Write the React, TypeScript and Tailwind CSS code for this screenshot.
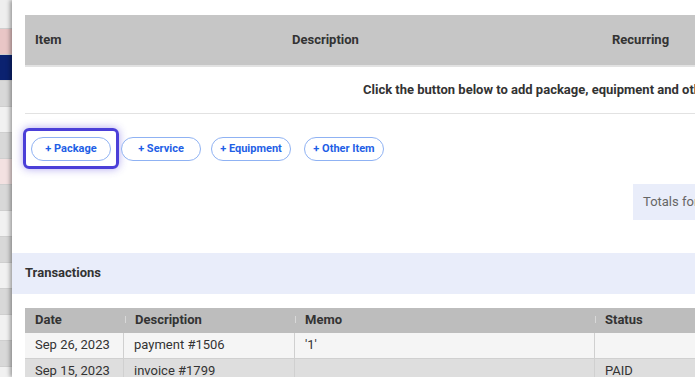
import React from "react";

const bands = [
  { h: 29, c: "bg-[#eeeeee]" },
  { h: 26, c: "bg-[#e9c6c6]" },
  { h: 26, c: "bg-[#0b2270]" },
  { h: 26, c: "bg-[#d8d8d8]" },
  { h: 26, c: "bg-[#f1f1f1]" },
  { h: 26, c: "bg-[#d8d8d8]" },
  { h: 26, c: "bg-[#f3e1e1]" },
  { h: 26, c: "bg-[#d8d8d8]" },
  { h: 26, c: "bg-[#f1f1f1]" },
  { h: 26, c: "bg-[#d8d8d8]" },
  { h: 26, c: "bg-[#f1f1f1]" },
  { h: 26, c: "bg-[#d8d8d8]" },
  { h: 26, c: "bg-[#f1f1f1]" },
  { h: 26, c: "bg-[#d8d8d8]" },
  { h: 26, c: "bg-[#f1f1f1]" },
];

const txns = [
  { date: "Sep 26, 2023", desc: "payment #1506", memo: "'1'", status: "", bg: "bg-[#f5f5f5]" },
  { date: "Sep 15, 2023", desc: "invoice #1799", memo: "", status: "PAID", bg: "bg-[#dedede]" },
];

function PillButton({ label }: { label: string }) {
  return (
    <button className="w-[80px] h-[24px] rounded-full border border-[#8fb2f3] bg-white text-[11px] font-bold text-[#1f5fe6] leading-none">
      {label}
    </button>
  );
}

export default function App() {
  return (
    <div
      className="w-[695px] h-[377px] overflow-hidden flex bg-white text-[#333]"
      style={{ fontFamily: "Roboto, 'Liberation Sans', sans-serif" }}
    >
      <div className="w-[12px] shrink-0 flex flex-col">
        {bands.map((b, i) => (
          <div key={i} className={`${b.c} shrink-0 border-b border-[#cfcfcf]`} style={{ height: b.h }} />
        ))}
      </div>

      <div className="relative z-10 w-[1000px] shrink-0 bg-white shadow-[-2px_0_4px_rgba(0,0,0,0.35)] pt-[15px]">
        <div className="ml-[13px]">
          <div className="h-[50px] bg-[#c6c6c6] flex items-center text-[13px] font-bold border-b-2 border-[#e2e2e2] box-content">
            <div className="w-[257px] pl-[10px]">Item</div>
            <div className="w-[320px] pl-[10px]">Description</div>
            <div className="pl-[10px]">Recurring</div>
          </div>
          <div className="h-[47px] flex items-center border-b border-[#e2e2e2] pl-[338px] text-[13px] font-bold whitespace-nowrap">
            Click the button below to add package, equipment and other items.
          </div>
        </div>

        <div className="flex items-start mt-[14px] ml-[11px]">
          <div className="border-[3px] border-[#4b3fd8] rounded-[6px] pt-[4px] pb-[5px] px-[5px] shadow-[0_0_8px_rgba(80,60,220,0.45)]">
            <PillButton label="+ Package" />
          </div>
          <div className="mt-[7px] ml-[2px]">
            <PillButton label="+ Service" />
          </div>
          <div className="mt-[7px] ml-[10px]">
            <PillButton label="+ Equipment" />
          </div>
          <div className="mt-[7px] ml-[13px]">
            <PillButton label="+ Other Item" />
          </div>
        </div>

        <div className="flex mt-[15px]">
          <div className="ml-[621px] h-[36px] w-[300px] bg-[#e9edfa] flex items-center pl-[10px] text-[13px] text-[#666]">
            Totals for this quote
          </div>
        </div>

        <div className="mt-[33px] h-[41px] bg-[#e9edfa] flex items-center pl-[13px] text-[13px] font-bold text-[#333]">
          Transactions
        </div>

        <div className="ml-[13px] mt-[14px]">
          <div className="h-[25px] bg-[#bdbdbd] flex items-center text-[13px] font-bold">
            <div className="w-[99px] pl-[10px] relative h-full flex items-center">
              Date
              <span className="absolute right-[-2px] top-[8px] h-[7px] w-px bg-[#d8d8d8]" />
            </div>
            <div className="w-[171px] pl-[11px] relative h-full flex items-center">
              Description
              <span className="absolute right-[-1px] top-[8px] h-[7px] w-px bg-[#d8d8d8]" />
            </div>
            <div className="w-[300px] pl-[10px] relative h-full flex items-center">
              Memo
              <span className="absolute right-[-1px] top-[8px] h-[7px] w-px bg-[#d8d8d8]" />
            </div>
            <div className="pl-[10px]">Status</div>
          </div>
          {txns.map((t, i) => (
            <div key={i} className={`h-[26px] flex text-[13px] ${t.bg} border-b border-[#d0d0d0]`}>
              <div className="w-[99px] pl-[10px] flex items-center border-r border-[#d0d0d0]">{t.date}</div>
              <div className="w-[171px] pl-[10px] flex items-center border-r border-[#d0d0d0]">{t.desc}</div>
              <div className="w-[300px] pl-[10px] flex items-center border-r border-[#d0d0d0]">{t.memo}</div>
              <div className="pl-[10px] flex items-center">{t.status}</div>
            </div>
          ))}
        </div>
      </div>
    </div>
  );
}
